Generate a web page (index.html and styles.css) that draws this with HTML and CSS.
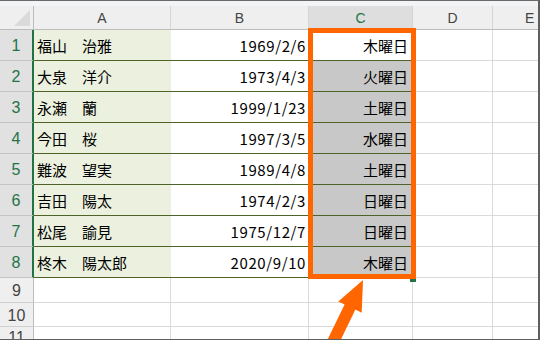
FILE: index.html
```html
<!DOCTYPE html>
<html lang="ja">
<head>
<meta charset="utf-8">
<title>曜日</title>
<link rel="stylesheet" href="styles.css">
</head>
<body>
<div class="frame">
  <div class="strip"></div>
  <div class="sheet">
    <div class="hd corner"><svg width="18" height="18" viewBox="0 0 18 18"><polygon points="17,1 17,17 1,17" fill="#dadada"/></svg></div>
    <div class="hd col">A</div>
    <div class="hd col">B</div>
    <div class="hd col sel">C</div>
    <div class="hd col">D</div>
    <div class="hd col last">E</div>

    <div class="rh on">1</div><div class="c name">福山　治雅</div><div class="c date">1969/2/6</div><div class="c day active">木曜日</div><div class="c e"></div><div class="c e last"></div>
    <div class="rh on">2</div><div class="c name">大泉　洋介</div><div class="c date">1973/4/3</div><div class="c day">火曜日</div><div class="c e"></div><div class="c e last"></div>
    <div class="rh on">3</div><div class="c name">永瀬　蘭</div><div class="c date">1999/1/23</div><div class="c day">土曜日</div><div class="c e"></div><div class="c e last"></div>
    <div class="rh on">4</div><div class="c name">今田　桜</div><div class="c date">1997/3/5</div><div class="c day">水曜日</div><div class="c e"></div><div class="c e last"></div>
    <div class="rh on">5</div><div class="c name">難波　望実</div><div class="c date">1989/4/8</div><div class="c day">土曜日</div><div class="c e"></div><div class="c e last"></div>
    <div class="rh on">6</div><div class="c name">吉田　陽太</div><div class="c date">1974/2/3</div><div class="c day">日曜日</div><div class="c e"></div><div class="c e last"></div>
    <div class="rh on">7</div><div class="c name">松尾　諭見</div><div class="c date">1975/12/7</div><div class="c day">日曜日</div><div class="c e"></div><div class="c e last"></div>
    <div class="rh on">8</div><div class="c name">柊木　陽太郎</div><div class="c date">2020/9/10</div><div class="c day">木曜日</div><div class="c e"></div><div class="c e last"></div>

    <div class="rh">9</div><div class="c e"></div><div class="c e"></div><div class="c e"></div><div class="c e"></div><div class="c e last"></div>
    <div class="rh">10</div><div class="c e"></div><div class="c e"></div><div class="c e"></div><div class="c e"></div><div class="c e last"></div>
    <div class="rh">11</div><div class="c e"></div><div class="c e"></div><div class="c e"></div><div class="c e"></div><div class="c e last"></div>
  </div>

  <div class="handle"></div>
  <div class="pick"></div>
  <svg class="arrow" width="540" height="340" viewBox="0 0 540 340">
    <polygon points="363,280 338.3,301.4 344.6,304.4 322.8,349.4 333.6,354.6 355.4,309.6 361.7,312.7" fill="#ff6600"/>
  </svg>
</div>
</body>
</html>
```
FILE: styles.css
```css
html, body {
  margin: 0;
  padding: 0;
  background: #ffffff;
}

.frame {
  position: relative;
  width: 540px;
  height: 340px;
  box-sizing: border-box;
  border-top: 1px solid #6a6a6a;
  border-right: 2px solid #5f5f5f;
  border-bottom: 1px solid #5f5f5f;
  overflow: hidden;
  font-family: "Noto Sans CJK JP", "Noto Sans", sans-serif;
  font-size: 15px;
  color: #000;
}

.strip {
  height: 5px;
  background: #f3f4f5;
}

.sheet {
  display: grid;
  grid-template-columns: 34px 137px 138px 104px 80px 1fr;
  grid-template-rows: 24px repeat(8, 31px) 25px 24px 1fr;
}

/* header cells */
.hd {
  box-sizing: border-box;
  background: #efefef;
  border-bottom: 1px solid #bcbcbc;
  border-right: 1px solid #d5d5d5;
  display: flex;
  align-items: center;
  justify-content: center;
  font-family: "Liberation Sans", "Noto Sans", sans-serif;
  font-size: 14px;
  color: #444;
}

.hd.corner {
  justify-content: flex-end;
  align-items: flex-end;
  padding: 0 2px 2px 0;
  border-right: 1px solid #bcbcbc;
}

.hd.sel {
  background: #dedede;
  color: #217346;
}

.hd.last {
  border-right: none;
  justify-content: flex-start;
  padding-left: 32px;
}

/* row number cells */
.rh {
  box-sizing: border-box;
  background: #efefef;
  border-right: 1px solid #bcbcbc;
  border-bottom: 1px solid #d0d0d0;
  display: flex;
  align-items: center;
  justify-content: center;
  font-family: "Liberation Sans", "Noto Sans", sans-serif;
  font-size: 16px;
  color: #444;
  padding-top: 2px;
}

.rh.on {
  background: #e1e1e1;
  color: #217346;
  border-right: 2px solid #217346;
  border-bottom: 1px solid #c4c4c4;
}

/* body cells */
.c {
  box-sizing: border-box;
  display: flex;
  align-items: center;
  white-space: nowrap;
  border-bottom: 1px solid #4f6228;
}

.name {
  background: #ebf1de;
  padding-left: 3px;
}

.date {
  justify-content: flex-end;
  padding-right: 3px;
  letter-spacing: 0.6px;
}

.day {
  justify-content: flex-end;
  padding-right: 5px;
  background: #c8c8c8;
}

.day.active {
  background: #ffffff;
}

.e {
  border-bottom: 1px solid #dadada;
  border-right: 1px solid #dadada;
}

.e.last {
  border-right: none;
}

/* selection overlay */
.handle {
  position: absolute;
  left: 410px;
  top: 276px;
  width: 6px;
  height: 5px;
  background: #217346;
}

.pick {
  position: absolute;
  left: 308px;
  top: 27px;
  width: 108px;
  height: 251px;
  box-sizing: border-box;
  border: 5px solid #ff6600;
}

.arrow {
  position: absolute;
  left: 0;
  top: -1px;
}
```
